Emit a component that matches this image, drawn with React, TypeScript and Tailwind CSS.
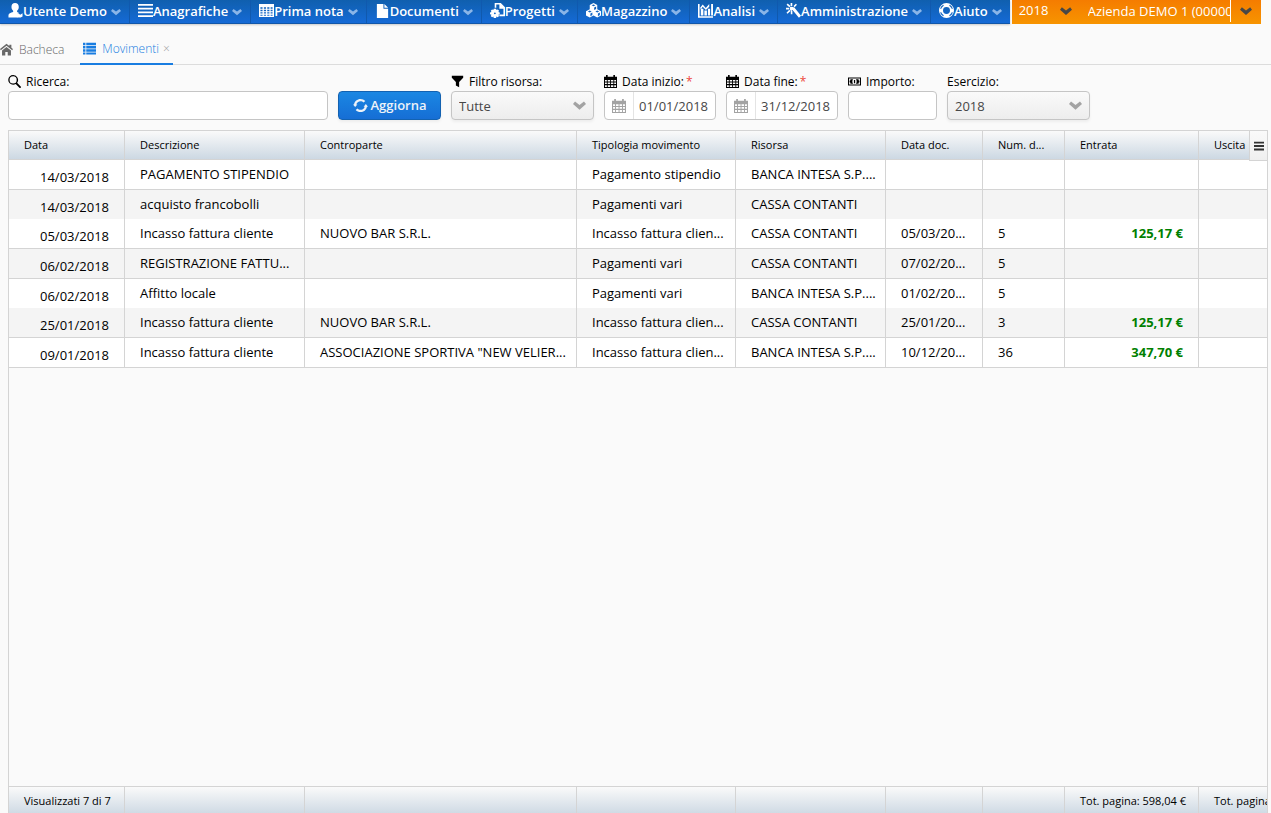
import { useState, type ReactNode } from "react";
import { cva } from "class-variance-authority";
import clsx from "clsx";

type IconProps = { className?: string };

function Icon({ className, children }: IconProps & { children: ReactNode }) {
  return (
    <svg viewBox="0 0 16 16" fill="currentColor" aria-hidden="true" className={clsx("shrink-0", className)}>
      {children}
    </svg>
  );
}

const UserIcon = (p: IconProps) => (
  <Icon {...p}>
    <path d="M7.500 0C5 0 3.700 1.700 3.700 4.200c0 1.800.8 3.200 1.800 4v1.300C3 10.200.5 11 .5 13v2.500h9.500V12l1.500-1.500-1.800-1V8.200c1-.8 1.800-2.200 1.800-4C11.500 1.700 10 0 7.500 0z" />
    <path d="M9.500 12l1.700-1 1.800 1.500L15.500 11v3.500l-2 1h-4z" />
  </Icon>
);
const LinesIcon = (p: IconProps) => (
  <Icon {...p}>
    <path d="M0 1h16v2H0zM0 5h16v2H0zM0 9h16v2H0zM0 13h16v2H0z" />
  </Icon>
);
const TableIcon = (p: IconProps) => (
  <Icon {...p}>
    <path
      fillRule="evenodd"
      d="M0 1h16v14H0zM1.500 4.500v1.700h2.300V4.500zM5.200 4.500v1.700h2.300V4.500zM8.800 4.500v1.700h2.300V4.500zM12.400 4.500v1.700h2.100V4.500zM1.500 7.200v1.500h2.300V7.200zM5.200 7.200v1.500h2.300V7.200zM8.800 7.200v1.500h2.300V7.200zM12.400 7.200v1.500h2.100V7.200zM1.500 9.800v1.500h2.300V9.800zM5.200 9.800v1.500h2.300V9.800zM8.800 9.800v1.500h2.300V9.800zM12.400 9.800v1.500h2.100V9.800zM1.500 12.400v1.300h2.300v-1.300zM5.200 12.400v1.300h2.300v-1.300zM8.800 12.400v1.300h2.300v-1.300zM12.400 12.400v1.300h2.100v-1.300z"
    />
  </Icon>
);
const FileIcon = (p: IconProps) => (
  <Icon {...p}>
    <path d="M2 1h7v5h5v10H2zM10 1l4 4h-4z" />
  </Icon>
);
const FileGearIcon = (p: IconProps) => (
  <Icon {...p}>
    <path d="M5 0h6.500L16 4.500V14H10v-1.700h4.300V6H10V1.700H6.700V5H5z" />
    <path
      fillRule="evenodd"
      d="M4 6h2.500l.3 1.500 1.400-.7 1.500 1.500-.8 1.400 1.500.3v2l-1.500.4.8 1.400-1.500 1.500-1.400-.8-.3 1.500H4l-.4-1.500-1.400.8L.8 13.800l.8-1.400L0 12v-2l1.600-.3L.8 8.300l1.400-1.500 1.400.7zM5.200 10a1 1 0 100 2 1 1 0 000-2z"
    />
  </Icon>
);
const CubesIcon = (p: IconProps) => (
  <Icon {...p}>
    <path
      fillRule="evenodd"
      d="M8 0l4 2v4.700l4 2v4.500L12 15.500 8 13.400l-4 2.100-4-2.300V8.700l4-2V2zM8 1.500L6 2.500l2 1 2-1zM8.700 4.800V7.500L10.800 6.400V3.700zM4 8.100l-2 1 2 1 2-1zM4.700 11.300V14l2.100-1.100v-2.700zM12 8.100l-2 1 2 1 2-1zM12.700 11.300V14l2.100-1.100v-2.700z"
    />
  </Icon>
);
const AnalysisIcon = (p: IconProps) => (
  <Icon {...p}>
    <path d="M0 1h1.700v13H16v1.700H0zM3 6h2.700v7.200H3zM6.800 8h2.700v5.200H6.800zM10.600 6h2.300v7.200h-2.300zM14 1h2v12.200h-2z" />
    <path d="M2.300 5L5 1.500l3.300 3.700L12 1v3L8.400 7.500 5 4 3 7z" />
  </Icon>
);
const MagicIcon = (p: IconProps) => (
  <Icon {...p}>
    <path d="M6.500 6.800l2.200-2.200L16 13.500 13.800 15.700zM4.900 0h1.800v3.500H4.900zM.6 1.800L1.800.6l3 2.700-1.200 1.200zM0 5.100h3.500v1.800H0zM3.500 7.200l1.300 1.300-3.200 3-1.100-1.100zM5.100 8.200h1.700V12H5.100zM8 3.300L10.500.7l1.200 1.200L9.200 4.500zM4.300 4.300h3.400l1 1-3.200 3.200-1.200-1.200z" />
  </Icon>
);
const HelpIcon = (p: IconProps) => (
  <Icon {...p}>
    <path
      fillRule="evenodd"
      d="M8 0a8 8 0 100 16A8 8 0 008 0zM8 4.300a3.700 3.700 0 110 7.400 3.700 3.700 0 010-7.400zM1.300 6C1.800 4.200 3 2.800 4.600 1.900l.5 1C3.800 3.700 2.800 4.900 2.300 6.300zM14.700 6l-1 .3c-.5-1.400-1.500-2.600-2.800-3.400l.5-1C13 2.800 14.200 4.200 14.700 6zM1.300 10l1-.3c.5 1.400 1.500 2.600 2.800 3.400l-.5 1C3 13.200 1.800 11.800 1.300 10zM14.700 10c-.5 1.800-1.700 3.200-3.300 4.100l-.5-1c1.300-.8 2.300-2 2.800-3.400z"
    />
  </Icon>
);
const HomeIcon = (p: IconProps) => (
  <Icon {...p}>
    <path d="M8 .8L0 7.500 1 9l7-5.700L15 9l1-1.500-2-1.700V2h-2.500v1.700zM8 4.800L2.500 9.200v6.300h4V11h3v4.500h4V9.200z" />
  </Icon>
);
const ListIcon = (p: IconProps) => (
  <Icon {...p}>
    <path d="M0 1h3v3H0zM4 1h12v3H4zM0 5h3v3H0zM4 5h12v3H4zM0 9h3v3H0zM4 9h12v3H4zM0 13h3v2.500H0zM4 13h12v2.500H4z" />
  </Icon>
);
const SearchIcon = (p: IconProps) => (
  <Icon {...p}>
    <path
      fillRule="evenodd"
      d="M6.300 0a6 6 0 100 12c1.200 0 2.300-.3 3.200-.9l4.500 4.500c.5.500 1.200.5 1.600 0 .5-.4.5-1.100 0-1.600l-4.400-4.400A6 6 0 006.300 0zm0 1.600a4.400 4.400 0 110 8.800 4.400 4.400 0 010-8.800z"
    />
  </Icon>
);
const FunnelIcon = (p: IconProps) => (
  <Icon {...p}>
    <path d="M1 1h14v2.500L10 8.500V15l-4-2V8.500L1 3.500z" />
  </Icon>
);
const CalendarIcon = (p: IconProps) => (
  <Icon {...p}>
    <path
      fillRule="evenodd"
      d="M0 2h2.500V0h2v2h7V0h2v2H16v14H0zM1.200 6v2h2.300V6zM4.600 6v2h2.900V6zM8.600 6v2h2.900V6zM12.600 6v2h2.200V6zM1.200 9.200v2h2.300v-2zM4.600 9.200v2h2.900v-2zM8.600 9.200v2h2.900v-2zM12.600 9.200v2h2.200v-2zM1.200 12.500v2.300h2.300v-2.300zM4.600 12.500v2.300h2.900v-2.300zM8.600 12.500v2.300h2.900v-2.300zM12.600 12.500v2.300h2.200v-2.300z"
    />
  </Icon>
);
const MoneyIcon = (p: IconProps) => (
  <Icon {...p}>
    <path fillRule="evenodd" d="M0 3h16v10H0zM1.300 4.300v7.400h13.400V4.300z" />
    <path d="M3 5.200h3.300c-1.300 1.300-1.300 4.300 0 5.600H3V9.500l-1-.5V7l1-.5zM13 5.200H9.700c1.300 1.300 1.300 4.300 0 5.600H13V9.500l1-.5V7l-1-.5zM7.300 6h1.500v4H7.300z" />
  </Icon>
);
const RefreshIcon = (p: IconProps) => (
  <Icon {...p}>
    <path d="M8 1C4.500 1 1.700 3.500 1.100 6.800H0l2.300 2.900L4.700 6.800H3.500C4 4.800 5.800 3.400 8 3.400c1.300 0 2.500.5 3.300 1.400l1.800-1.600C11.800 1.800 10 1 8 1zM13.700 6.300l-2.400 2.900h1.200c-.5 2-2.300 3.400-4.500 3.400-1.300 0-2.500-.5-3.300-1.400l-1.800 1.600C4.200 14.200 6 15 8 15c3.500 0 6.300-2.500 6.900-5.800H16z" />
  </Icon>
);
const ChevronIcon = (p: IconProps) => (
  <Icon {...p}>
    <path d="M2.500 3L8 7.300 13.500 3 16 6.200l-8 7-8-7z" />
  </Icon>
);

const menu = [
  { label: "Utente Demo", icon: UserIcon },
  { label: "Anagrafiche", icon: LinesIcon },
  { label: "Prima nota", icon: TableIcon },
  { label: "Documenti", icon: FileIcon },
  { label: "Progetti", icon: FileGearIcon },
  { label: "Magazzino", icon: CubesIcon },
  { label: "Analisi", icon: AnalysisIcon },
  { label: "Amministrazione", icon: MagicIcon },
  { label: "Aiuto", icon: HelpIcon },
];

const columns = [
  { label: "Data", width: "w-[116px]", footer: "Visualizzati 7 di 7" },
  { label: "Descrizione", width: "w-[180px]" },
  { label: "Controparte", width: "w-[272px]" },
  { label: "Tipologia movimento", width: "w-[159px]" },
  { label: "Risorsa", width: "w-[150px]" },
  { label: "Data doc.", width: "w-[97px]" },
  { label: "Num. d...", width: "w-[82px]" },
  { label: "Entrata", width: "w-[134px]", footer: "Tot. pagina: 598,04 €" },
  { label: "Uscita", width: "w-[134px]", footer: "Tot. pagina" },
];

// data, descrizione, controparte, tipologia, risorsa, data doc., num. doc., entrata, uscita
const rows = [
  ["14/03/2018", "PAGAMENTO STIPENDIO", "", "Pagamento stipendio", "BANCA INTESA S.P....", "", "", "", ""],
  ["14/03/2018", "acquisto francobolli", "", "Pagamenti vari", "CASSA CONTANTI", "", "", "", ""],
  ["05/03/2018", "Incasso fattura cliente", "NUOVO BAR S.R.L.", "Incasso fattura clien...", "CASSA CONTANTI", "05/03/20...", "5", "125,17 €", ""],
  ["06/02/2018", "REGISTRAZIONE FATTU...", "", "Pagamenti vari", "CASSA CONTANTI", "07/02/20...", "5", "", ""],
  ["06/02/2018", "Affitto locale", "", "Pagamenti vari", "BANCA INTESA S.P....", "01/02/20...", "5", "", ""],
  ["25/01/2018", "Incasso fattura cliente", "NUOVO BAR S.R.L.", "Incasso fattura clien...", "CASSA CONTANTI", "25/01/20...", "3", "125,17 €", ""],
  ["09/01/2018", "Incasso fattura cliente", 'ASSOCIAZIONE SPORTIVA "NEW VELIER...', "Incasso fattura clien...", "BANCA INTESA S.P....", "10/12/20...", "36", "347,70 €", ""],
];

const cell = cva("overflow-hidden whitespace-nowrap border-r border-[#d4d4d4] px-[15px] text-left", {
  variants: {
    kind: {
      head: "h-[29px] border-b text-[11px] font-normal",
      body: "text-[13px]",
      foot: "h-[29px] text-[11px]",
    },
  },
});

const field = "h-[29px] rounded-[4px] border border-[#c5c5c5] bg-white text-[13px] text-[#474747] outline-none";

function Field({ id, label, icon: LabelIcon, required, children }: {
  id: string;
  label: string;
  icon?: (p: IconProps) => ReactNode;
  required?: boolean;
  children: ReactNode;
}) {
  return (
    <div className="flex flex-col">
      <label htmlFor={id} className="flex h-[19px] items-center text-[12px] text-black">
        {LabelIcon && <LabelIcon className="mr-[5px] size-[13px]" />}
        {label}
        {required && <span className="ml-[2px] text-[#ed473b]">*</span>}
      </label>
      {children}
    </div>
  );
}

function Select({ id, options }: { id: string; options: string[] }) {
  return (
    <div className="relative w-[143px]">
      <select
        id={id}
        className={clsx(field, "block w-full appearance-none bg-linear-to-b from-[#fafafa] to-[#ededed] pt-[2px] pl-[7px] shadow-[0_2px_3px_rgba(0,0,0,0.05)]")}
      >
        {options.map((o) => (
          <option key={o}>{o}</option>
        ))}
      </select>
      <ChevronIcon className="pointer-events-none absolute top-2 right-2 size-[13px] text-[#a3a3a3]" />
    </div>
  );
}

function DateField({ id, initial }: { id: string; initial: string }) {
  const [value, setValue] = useState(initial);
  return (
    <div className={clsx(field, "flex w-[112px] overflow-hidden")}>
      <button type="button" aria-label="Calendario" className="flex w-[29px] shrink-0 items-center justify-center border-r border-[#e4e4e4] text-[#a3a3a3]">
        <CalendarIcon className="size-[14px]" />
      </button>
      <input id={id} value={value} onChange={(e) => setValue(e.target.value)} className="w-full min-w-0 px-[5px] pt-[2px] outline-none" />
    </div>
  );
}

function Columns() {
  return (
    <colgroup>
      {columns.map((c) => (
        <col key={c.label} className={c.width} />
      ))}
    </colgroup>
  );
}

export default function App() {
  const [company, setCompany] = useState("Azienda DEMO 1 (000000)");

  return (
    <div className="flex h-screen flex-col overflow-hidden bg-[#fafafa] font-['Open_Sans',sans-serif] text-black">
      <header className="flex h-6 shrink-0">
        <nav className="flex border-b border-[#1156a8] bg-linear-to-b from-[#105fae] to-[#156ad6] text-white shadow-[0_1px_2px_rgba(0,0,0,0.2)]">
          {menu.map(({ label, icon: MenuIcon }) => (
            <button key={label} type="button" className="flex items-center border-r border-[#1059ae] px-2 text-[13px] font-semibold last:border-r-0">
              <MenuIcon className="mb-[2px] size-[15px]" />
              {label}
              <ChevronIcon className="mt-[1px] ml-1 size-[10px] text-[#8ab5e8]" />
            </button>
          ))}
        </nav>
        <div className="relative ml-[2px] w-[68px] bg-linear-to-b from-[#f57c00] to-[#f79400]">
          <select aria-label="Anno" className="block h-[22px] w-full appearance-none pl-[7px] text-[13px] text-white outline-none">
            <option>2018</option>
          </select>
          <ChevronIcon className="pointer-events-none absolute top-[5px] right-2 size-[12px] text-[#474747]" />
        </div>
        <div className="flex w-[181px] bg-linear-to-b from-[#f57c00] to-[#f79400]">
          <input
            aria-label="Azienda"
            value={company}
            onChange={(e) => setCompany(e.target.value)}
            className="h-[22px] w-[151px] border-r border-white pl-2 text-[13px] text-white outline-none"
          />
          <button type="button" aria-label="Apri elenco aziende" className="flex h-[22px] flex-1 items-center justify-center text-[#474747]">
            <ChevronIcon className="size-[12px]" />
          </button>
        </div>
      </header>

      <div role="tablist" className="flex h-[41px] shrink-0 items-end border-b border-[#dcdcdc] text-[12px] font-light">
        <button type="button" role="tab" aria-selected="false" className="flex h-[29px] items-center pr-4 text-[#696969]">
          <HomeIcon className="mr-[6px] size-[13px]" />
          Bacheca
        </button>
        <div className="-mb-[1px] flex h-[31px] items-center border-b-2 border-[#197de1] px-[3px] text-[#197de1]">
          <button type="button" role="tab" aria-selected="true" className="flex items-center">
            <ListIcon className="mr-[6px] size-[13px]" />
            Movimenti
          </button>
          <button type="button" aria-label="Chiudi scheda" className="ml-1 text-[#a0a0a0]">×</button>
        </div>
      </div>

      <form className="flex shrink-0 items-end gap-[10px] px-2 pt-[7px] pb-[10px]" onSubmit={(e) => e.preventDefault()}>
        <Field id="ricerca" label="Ricerca:" icon={SearchIcon}>
          <input id="ricerca" className={clsx(field, "w-[320px] px-[7px]")} />
        </Field>
        <button
          type="submit"
          className="flex h-[29px] w-[103px] items-center justify-center gap-[3px] rounded-[4px] border border-[#1362b1] bg-linear-to-b from-[#1b87e3] to-[#166ed5] text-[13px] font-semibold text-[#ecf2f8] shadow-[0_2px_3px_rgba(0,0,0,0.05)]"
        >
          <RefreshIcon className="size-[15px]" />
          Aggiorna
        </button>
        <Field id="risorsa" label="Filtro risorsa:" icon={FunnelIcon}>
          <Select id="risorsa" options={["Tutte", "CASSA CONTANTI"]} />
        </Field>
        <Field id="inizio" label="Data inizio:" icon={CalendarIcon} required>
          <DateField id="inizio" initial="01/01/2018" />
        </Field>
        <Field id="fine" label="Data fine:" icon={CalendarIcon} required>
          <DateField id="fine" initial="31/12/2018" />
        </Field>
        <Field id="importo" label="Importo:" icon={MoneyIcon}>
          <input id="importo" className={clsx(field, "w-[89px] px-[7px]")} />
        </Field>
        <Field id="esercizio" label="Esercizio:">
          <Select id="esercizio" options={["2018", "2017"]} />
        </Field>
      </form>

      <main className="relative mr-[3px] ml-2 flex min-h-0 flex-1 flex-col overflow-hidden border border-b-0 border-[#d4d4d4]">
        <div className="min-h-0 flex-1 overflow-hidden">
          <table className="w-[1324px] table-fixed border-separate border-spacing-0">
            <Columns />
            <thead className="bg-linear-to-b from-[#fafafa] to-[#cbd7e2]">
              <tr>
                {columns.map((c) => (
                  <th key={c.label} scope="col" className={cell({ kind: "head" })}>{c.label}</th>
                ))}
              </tr>
            </thead>
            <tbody>
              {rows.map((row, r) => {
                // every third divider, starting from the second row, is left out
                const open = r % 3 === 1;
                return (
                  <tr key={r} className={r % 2 ? "bg-[#f4f4f4]" : "bg-white"}>
                    {row.map((value, c) => (
                      <td
                        key={c}
                        className={clsx(
                          cell({ kind: "body" }),
                          open ? "h-[29px]" : "h-[30px] border-b",
                          c === 0 && "pt-[6px] text-right",
                          c === 7 && "text-right font-bold text-[#008000]"
                        )}
                      >
                        {value}
                      </td>
                    ))}
                  </tr>
                );
              })}
            </tbody>
          </table>
        </div>
        <div className="-mb-[3px] shrink-0 border-t border-[#d4d4d4]">
          <table className="w-[1324px] table-fixed border-separate border-spacing-0">
            <Columns />
            <tbody className="bg-linear-to-b from-[#fafafa] to-[#cbd7e2]">
              <tr>
                {columns.map((c) => (
                  <td key={c.label} className={cell({ kind: "foot" })}>{c.footer}</td>
                ))}
              </tr>
            </tbody>
          </table>
        </div>
        <button
          type="button"
          aria-label="Colonne"
          className="absolute top-0 right-0 flex h-[30px] w-[18px] items-center justify-center border-b border-l border-[#d4d4d4] bg-linear-to-b from-[#fafafa] to-[#efefef] text-[#333]"
        >
          <Icon className="size-[10px]">
            <path d="M0 1h16v3H0zM0 6.500h16v3H0zM0 12h16v3H0z" />
          </Icon>
        </button>
      </main>
    </div>
  );
}
